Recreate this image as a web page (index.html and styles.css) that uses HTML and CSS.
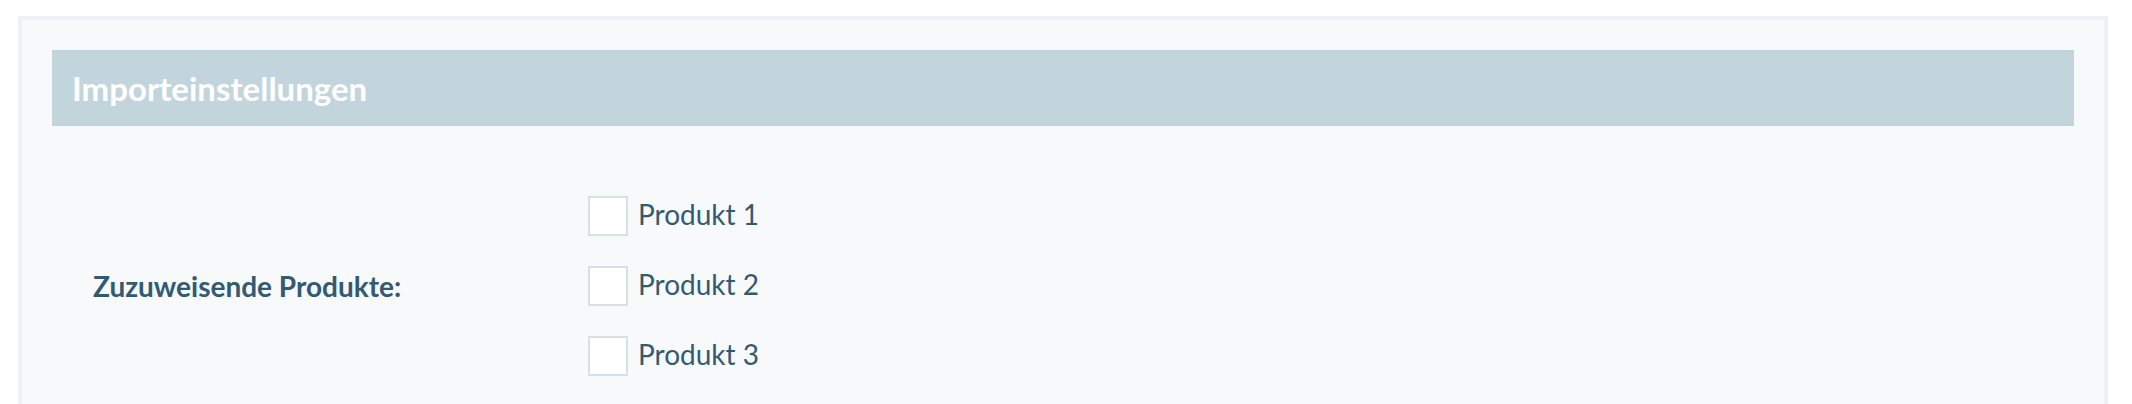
FILE: index.html
```html
<!DOCTYPE html>
<html lang="de">
<head>
    <meta charset="UTF-8">
    <title>Importeinstellungen</title>
    <link rel="stylesheet" href="styles.css">
</head>
<body>
    <div class="panel">
        <h2 class="panel-title">Importeinstellungen</h2>

        <div class="field-row">
            <label class="field-label">Zuzuweisende Produkte:</label>
            <div class="check-list">
                <label class="check-item"><span class="check-box"></span><span class="check-text">Produkt 1</span></label>
                <label class="check-item"><span class="check-box"></span><span class="check-text">Produkt 2</span></label>
                <label class="check-item"><span class="check-box"></span><span class="check-text">Produkt 3</span></label>
            </div>
        </div>
    </div>
</body>
</html>
```

FILE: styles.css
```css
* {
    box-sizing: border-box;
    margin: 0;
    padding: 0;
}
body {
    font-family: 'Lato', 'Noto Sans', sans-serif;
    background: #fff;
    color: #335a73;
    margin: 16px 24px 0 18px;
}
.panel {
    background: #f7f9fb;
    border: 4px solid #edf1f5;
    padding: 30px 30px 40px;
}
.panel-title {
    background: #c3d5dc;
    color: #fff;
    height: 76px;
    padding-left: 20px;
    display: flex;
    align-items: center;
    font-size: 33px;
    font-weight: 700;
}
.field-row {
    display: flex;
    align-items: center;
    margin-top: 70px;
    padding-left: 41px;
}
.field-label {
    width: 495px;
    font-size: 28px;
    font-weight: 700;
}
.check-list {
    display: flex;
    flex-direction: column;
    gap: 30px;
}
.check-item {
    display: flex;
    align-items: center;
    font-size: 28px;
    height: 40px;
}
.check-text {
    padding-bottom: 4px;
}
.check-box {
    width: 40px;
    height: 40px;
    background: #fff;
    border: 2px solid #d6e0e7;
    margin-right: 10px;
}
```
